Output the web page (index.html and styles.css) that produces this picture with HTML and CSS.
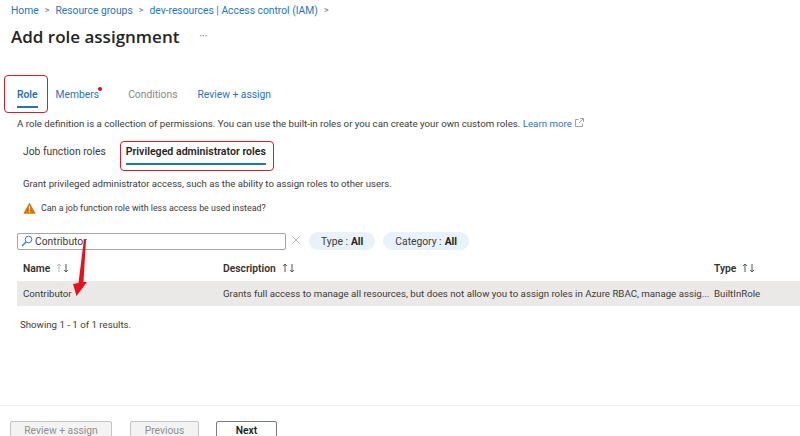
FILE: index.html
```html
<!DOCTYPE html>
<html lang="en">
<head>
<meta charset="utf-8">
<title>Add role assignment</title>
<link rel="stylesheet" href="styles.css">
</head>
<body>
<div class="page">
  <nav class="crumbs">
    <a>Home</a><span class="sep">&gt;</span><a>Resource groups</a><span class="sep">&gt;</span><a>dev-resources | Access control (IAM)</a><span class="sep">&gt;</span>
  </nav>
  <header class="title-row">
    <h1>Add role assignment</h1>
    <span class="more">···</span>
  </header>
  <div class="tabs">
    <span class="tab tab-active">Role</span>
    <span class="tab tab-link tab-members">Members<i class="dot"></i></span>
    <span class="tab tab-muted">Conditions</span>
    <span class="tab tab-link">Review + assign</span>
  </div>
  <p class="intro">A role definition is a collection of permissions. You can use the built-in roles or you can create your own custom roles. <a>Learn more</a>
    <svg class="ext" width="9" height="9" viewBox="0 0 9 9"><path d="M3.500 1.500H.5v7h7v-3M5 .5h3.500V4M8.500.5 4 5" fill="none" stroke="#8a8a8a" stroke-width=".8"/></svg>
  </p>
  <div class="subtabs">
    <span class="subtab">Job function roles</span>
    <span class="subtab subtab-active">Privileged administrator roles</span>
  </div>
  <p class="grant">Grant privileged administrator access, such as the ability to assign roles to other users.</p>
  <div class="warn">
    <svg width="13" height="12" viewBox="0 0 13 12"><path d="M6.500.5 12.700 11.700H.3Z" fill="#d9730d"/><path d="M6.500 4v4.200M6.500 9.200v1.200" stroke="#fff" stroke-width="1.200"/></svg>
    <span>Can a job function role with less access be used instead?</span>
  </div>
  <div class="filters">
    <div class="search">
      <svg width="12" height="12" viewBox="0 0 12 12"><circle cx="7.500" cy="4.500" r="3.300" fill="none" stroke="#2b7cd3" stroke-width="1"/><path d="M5 7 1 11" stroke="#2b7cd3" stroke-width="1.200"/></svg>
      <span>Contributor</span>
    </div>
    <svg class="clear" width="8" height="8" viewBox="0 0 8 8"><path d="M.5.5l7 7M7.500.5l-7 7" stroke="#a6a6a6" stroke-width=".8"/></svg>
    <span class="pill pill-type"><span>Type :</span><b>All</b></span>
    <span class="pill"><span>Category :</span><b>All</b></span>
  </div>
  <div class="grid grid-head">
    <span class="cell-h">Name <svg class="sort" width="14" height="10" viewBox="0 0 14 10"><path d="M3 9V1M1 3l2-2 2 2" fill="none" stroke="#b8b8b8"/><path d="M10 1v8M8 7l2 2 2-2" fill="none" stroke="#555"/></svg></span>
    <span class="cell-h">Description <svg class="sort" width="14" height="10" viewBox="0 0 14 10"><path d="M3 9V1M1 3l2-2 2 2" fill="none" stroke="#555"/><path d="M10 1v8M8 7l2 2 2-2" fill="none" stroke="#555"/></svg></span>
    <span class="cell-h">Type <svg class="sort" width="14" height="10" viewBox="0 0 14 10"><path d="M3 9V1M1 3l2-2 2 2" fill="none" stroke="#555"/><path d="M10 1v8M8 7l2 2 2-2" fill="none" stroke="#555"/></svg></span>
  </div>
  <div class="grid grid-row">
    <span>Contributor</span>
    <span>Grants full access to manage all resources, but does not allow you to assign roles in Azure RBAC, manage assig...</span>
    <span>BuiltInRole</span>
  </div>
  <p class="showing">Showing 1 - 1 of 1 results.</p>
  <footer class="footer">
    <button class="btn btn-off btn-review">Review + assign</button>
    <button class="btn btn-off btn-prev">Previous</button>
    <button class="btn btn-next">Next</button>
  </footer>
</div>
<div class="mark mark-role"></div>
<div class="mark mark-priv"></div>
<svg class="arrow" width="20" height="60" viewBox="0 0 20 60"><path d="M14 1 16 2 13.500 44 17 44 6.500 58 3 46 8.500 45Z" fill="#e8111a"/></svg>
</body>
</html>
```
FILE: styles.css
```css
* { box-sizing: border-box; }
html, body { margin: 0; height: 436px; overflow: hidden; background: #fff; }
body { position: relative; font-family: Roboto, "Open Sans", sans-serif; font-size: 10.3px; color: #3b3a39; }
.page { display: flex; flex-direction: column; height: 436px; overflow: hidden; }
a { color: #1f75bd; }
p { margin: 0; }
.crumbs { display: flex; align-items: center; height: 20px; padding-left: 11px; color: #1f75bd; }
.sep { margin: 0 6px; color: #777; font-size: 9px; }
.title-row { display: flex; align-items: center; height: 32px; padding-left: 11px; }
h1 { margin: 0; font-family: "Open Sans", sans-serif; font-size: 17px; font-weight: 600; color: #252423; }
.more { margin-left: 20px; font-size: 10px; color: #555; }
.tabs { display: flex; margin-top: 32px; height: 24px; padding-left: 17px; }
.tab { position: relative; line-height: 22px; margin-right: 20px; white-space: nowrap; }
.tab-active { color: #1f6fb5; font-weight: 600; border-bottom: 2px solid #1f75bd; height: 24px; margin-right: 18px; }
.tab-link { color: #1f75bd; }
.tab-muted { color: #8a8886; }
.tab-members { margin-right: 29px; }
.dot { position: absolute; right: -3px; top: 3px; width: 4px; height: 4px; border-radius: 50%; background: #e00b1c; }
.intro { margin-top: 8px; padding-left: 17px; font-size: 9.7px; line-height: 16px; white-space: nowrap; }
.ext { margin-left: 1px; }
.subtabs { display: flex; margin-top: 9px; padding-left: 23px; height: 26px; }
.subtab { line-height: 22px; white-space: nowrap; }
.subtab-active { margin-left: 20px; height: 24px; font-size: 10.6px; font-weight: 600; color: #252423; border-bottom: 2px solid #1f75bd; }
.grant { margin-top: 9px; padding-left: 23px; font-size: 9.6px; line-height: 16px; }
.warn { display: flex; align-items: center; gap: 5px; margin-top: 8px; padding-left: 23px; height: 16px; font-size: 8.9px; }
.filters { display: flex; align-items: center; margin-top: 16px; padding-left: 17px; height: 18px; }
.search { display: flex; align-items: center; gap: 2px; width: 269px; height: 17px; padding-left: 3px; border: 1px solid #a5a5a5; border-radius: 2px; }
.clear { margin-left: 6px; margin-top: -3px; }
.pill { display: flex; align-items: center; gap: 3px; height: 18px; padding: 0 12px; margin-left: 8px; border-radius: 9px; background: #e8f2fb; white-space: nowrap; }
.pill-type { margin-left: 9px; }
.pill b { font-weight: 700; color: #252423; }
.grid { display: grid; grid-template-columns: 200px 491px 1fr; margin-left: 17px; padding-left: 6px; align-items: center; }
.grid-head { height: 31px; font-weight: 600; color: #323130; padding-top: 5px; }
.cell-h { display: flex; align-items: center; gap: 6px; }
.grid-row { height: 25px; font-size: 9.7px; background: #ebe9e7; white-space: nowrap; }
.showing { margin-top: 11px; padding-left: 20px; font-size: 9.7px; line-height: 16px; }
.footer { display: flex; margin-top: auto; height: 31px; padding: 15px 0 0 10px; border-top: 1px solid #eee; }
.btn { height: 18px; font: inherit; border-radius: 2px; padding: 0; }
.btn-off { background: #f3f3f3; color: #8f8f8f; border: 1px solid #c4c4c4; }
.btn-review { width: 102px; }
.btn-prev { width: 69px; margin-left: 18px; }
.btn-next { width: 61px; margin-left: 17px; background: #fff; color: #201f1e; font-weight: 600; border: 1px solid #7a7a7a; }
.mark { position: absolute; border: 1.500px solid #d4202c; border-radius: 4px; }
.mark-role { left: 4px; top: 75px; width: 44px; height: 38px; }
.mark-priv { left: 120px; top: 141px; width: 154px; height: 30px; }
.arrow { position: absolute; left: 70px; top: 238px; }
```
